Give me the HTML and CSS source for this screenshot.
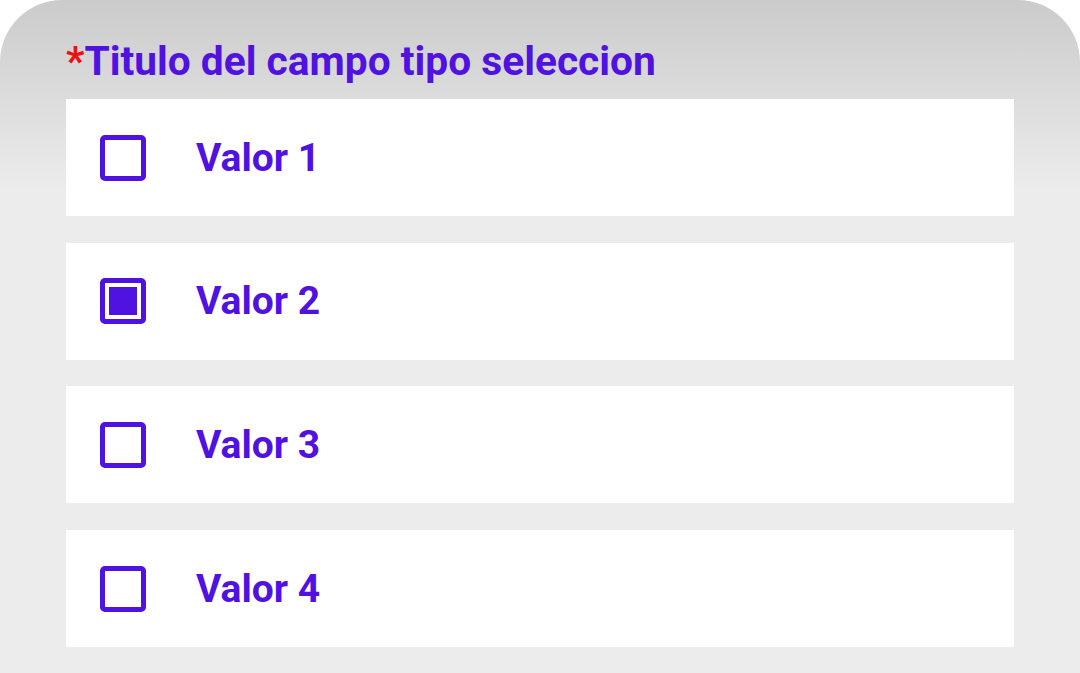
FILE: index.html
```html
<!DOCTYPE html>
<html lang="es">
<head>
<meta charset="utf-8">
<title>Campo tipo seleccion</title>
<link rel="stylesheet" href="styles.css">
</head>
<body>
<div class="card">
  <div class="title"><span class="req">*</span>Titulo del campo tipo seleccion</div>
  <div class="options">
    <div class="option"><span class="box"></span><span class="label">Valor 1</span></div>
    <div class="option"><span class="box checked"></span><span class="label">Valor 2</span></div>
    <div class="option"><span class="box"></span><span class="label">Valor 3</span></div>
    <div class="option"><span class="box"></span><span class="label">Valor 4</span></div>
  </div>
</div>
</body>
</html>
```
FILE: styles.css
```css
html, body {
  margin: 0;
  padding: 0;
  background: #ffffff;
}
body {
  width: 1080px;
  height: 673px;
  overflow: hidden;
  font-family: Roboto, "Liberation Sans", sans-serif;
}
.card {
  height: 673px;
  box-sizing: border-box;
  border-radius: 62px 62px 0 0;
  background: linear-gradient(to bottom, #cbcbcb 0px, #ececec 190px, #ececec 100%);
  padding: 38px 66px 0 66px;
}
.title {
  font-size: 40.7px;
  line-height: 46px;
  font-weight: 700;
  color: #5012e0;
  height: 46px;
}
.req {
  color: #ee1111;
}
.options {
  margin-top: 15px;
  display: flex;
  flex-direction: column;
  gap: 26.7px;
}
.option {
  height: 117px;
  background: #ffffff;
  display: flex;
  align-items: center;
  padding-left: 34px;
}
.box {
  width: 46px;
  height: 46px;
  box-sizing: border-box;
  border: 5px solid #5012e0;
  border-radius: 5px;
  padding: 4px;
  flex: none;
}
.box.checked::after {
  content: "";
  display: block;
  width: 100%;
  height: 100%;
  background: #5012e0;
}
.label {
  margin-left: 50px;
  font-size: 39px;
  line-height: 46px;
  font-weight: 700;
  color: #5012e0;
}
```
